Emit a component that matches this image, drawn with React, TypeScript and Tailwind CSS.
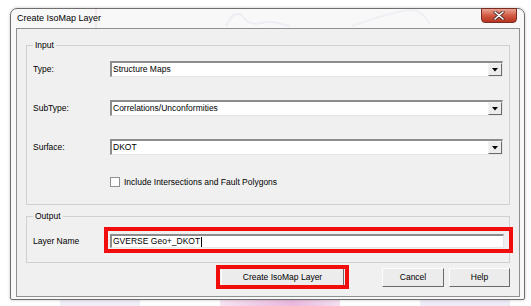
import React from "react";

const font = { fontFamily: '"Liberation Sans", Arial, sans-serif' };

function Combo({ value }: { value: string }) {
  return (
    <div className="flex h-[16px] w-[393px] items-stretch border-t-2 border-l-2 border-b border-r border-t-[#8c8c8c] border-l-[#8c8c8c] border-b-[#e6e6e6] border-r-[#e6e6e6] bg-white">
      <div className="flex flex-1 items-center pl-[1px] text-[8.5px] leading-none text-black">{value}</div>
      <div className="flex w-[14px] items-center justify-center border border-t-[#f4f4f4] border-l-[#f4f4f4] border-b-[#6a6a6a] border-r-[#6a6a6a] bg-[#ececec]">
        <svg width="6" height="4" viewBox="0 0 6 4">
          <path d="M0 0 H6 L3 3.5 Z" fill="#000" />
        </svg>
      </div>
    </div>
  );
}

function Label({ children }: { children: React.ReactNode }) {
  return (
    <div className="flex w-[83px] items-center pl-[6px] text-[8.5px] leading-none text-black">{children}</div>
  );
}

function Btn({ w, children, red }: { w: string; children: React.ReactNode; red?: boolean }) {
  return (
    <div className={`relative ${w}`}>
      <div className="flex h-[19px] w-full items-center justify-center border border-t-[#fdfdfd] border-l-[#fdfdfd] border-b-[#6a6a6a] border-r-[#6a6a6a] bg-[#ececec] text-[8.5px] leading-none text-black">
        {children}
      </div>
      {red && (
        <div className="absolute -left-[5px] -right-[5px] -top-[3px] -bottom-[2px] border-4 border-[#f20d0d]" />
      )}
    </div>
  );
}

export default function App() {
  return (
    <div className="relative h-[306px] w-[531px] overflow-hidden bg-white" style={font}>
      <svg className="absolute inset-0" width="531" height="306">
        <defs>
          <linearGradient id="pk" x1="0" y1="0" x2="1" y2="0">
            <stop offset="0" stopColor="#f3d9ec" />
            <stop offset="0.6" stopColor="#e3a0d2" />
            <stop offset="1" stopColor="#f0d5ea" />
          </linearGradient>
        </defs>
        <line x1="96" y1="8" x2="96" y2="28" stroke="#e9a9a9" strokeWidth="2" />
        <path d="M226 26 C232 14 238 10 244 18 C250 26 258 24 266 22 C272 21 280 24 290 26" fill="none" stroke="#c3c6e6" strokeWidth="2" />
        <path d="M352 26 C370 20 390 12 410 10 C418 9 424 14 430 24" fill="none" stroke="#cacbe8" strokeWidth="2" />
        <rect x="220" y="300" width="120" height="6" fill="url(#pk)" opacity="0.75" />
        <rect x="60" y="300" width="80" height="6" fill="#e6e1f2" opacity="0.6" />
        <rect x="420" y="300" width="90" height="6" fill="#e3def2" opacity="0.6" />
      </svg>

      <div className="relative pl-[10px] pt-[8px]">
        <div className="flex h-[292px] w-[515px] flex-col rounded-t-[7px] rounded-b-[2px] border border-[#6e6e6e] bg-[rgba(247,247,247,0.82)] shadow-[0_0_3px_rgba(0,0,0,0.25)]">
          {/* title bar */}
          <div className="flex h-[19px] items-start">
            <div className="self-center pl-[6px] text-[9px] leading-none text-black">Create IsoMap Layer</div>
            <div className="ml-auto mr-[7px] -mt-px flex h-[15px] w-[36px] items-center justify-center rounded-b-[4px] border border-[#7a2c22] bg-gradient-to-b from-[#e9a393] via-[#d25a44] to-[#b7331f]">
              <svg width="12" height="9" viewBox="0 0 12 9">
                <path d="M2 1 L10 8 M10 1 L2 8" stroke="#4a2a26" strokeWidth="3.2" strokeLinecap="round" />
                <path d="M2 1 L10 8 M10 1 L2 8" stroke="#ffffff" strokeWidth="1.6" strokeLinecap="round" />
              </svg>
            </div>
          </div>

          {/* client area */}
          <div className="ml-[5px] mr-[4px] flex h-[269px] flex-col border border-[#8f8f8f] bg-[#f0f0f0] pl-[9px]">
            <fieldset className="mt-[11px] w-[484px] border border-[#d0d0d0] pb-[17px] pt-[11px]">
              <legend className="ml-[6px] px-[2px] text-[8.5px] leading-[10px] text-black">Input</legend>
              <div className="flex flex-col gap-[23px]">
                <div className="flex h-[16px]">
                  <Label>Type:</Label>
                  <Combo value="Structure Maps" />
                </div>
                <div className="flex h-[16px]">
                  <Label>SubType:</Label>
                  <Combo value="Correlations/Unconformities" />
                </div>
                <div className="flex h-[16px]">
                  <Label>Surface:</Label>
                  <Combo value="DKOT" />
                </div>
              </div>
              <div className="mt-[22px] flex h-[10px] items-center pl-[83px]">
                <div className="h-[10px] w-[10px] border border-[#8e8f8f] bg-white" />
                <div className="pl-[4px] text-[8.5px] leading-none text-black">Include Intersections and Fault Polygons</div>
              </div>
            </fieldset>

            <fieldset className="mt-[6px] w-[484px] border border-[#d0d0d0] pb-[14px] pt-[13px]">
              <legend className="ml-[6px] px-[2px] text-[8.5px] leading-[10px] text-black">Output</legend>
              <div className="flex h-[14px]">
                <Label>Layer Name</Label>
                <div className="relative w-[394px]">
                  <div className="flex h-[14px] items-center border-t-2 border-l-2 border-b border-r border-t-[#8c8c8c] border-l-[#8c8c8c] border-b-[#e6e6e6] border-r-[#e6e6e6] bg-white pl-[1px] text-[8.5px] leading-none text-black">
                    GVERSE Geo+_DKOT<span className="ml-[1px] inline-block h-[10px] w-px bg-black" />
                  </div>
                  <div className="absolute -left-[6px] -right-[9px] -top-[7px] -bottom-[5px] border-4 border-[#f20d0d]" />
                </div>
              </div>
            </fieldset>

            <div className="mt-[5px] flex w-[484px] justify-end">
              <Btn w="w-[123px]" red>
                Create IsoMap Layer
              </Btn>
              <div className="w-[38px]" />
              <Btn w="w-[62px]">Cancel</Btn>
              <div className="w-[5px]" />
              <Btn w="w-[61px]">Help</Btn>
            </div>
          </div>
        </div>
      </div>
    </div>
  );
}
